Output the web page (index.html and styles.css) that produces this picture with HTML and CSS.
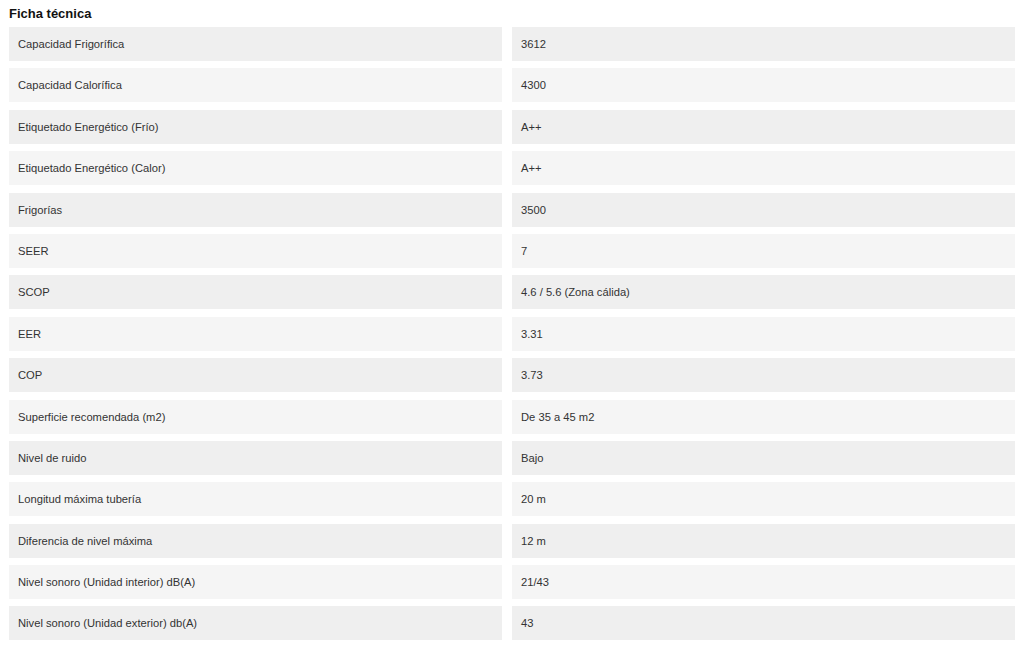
FILE: index.html
```html
<!DOCTYPE html>
<html lang="es">
<head>
<meta charset="utf-8">
<title>Ficha técnica</title>
<link rel="stylesheet" href="styles.css">
</head>
<body>
<section class="sheet">
  <h2 class="sheet-title">Ficha técnica</h2>
  <div class="spec-grid">
    <div class="cell dark">Capacidad Frigorífica</div><div class="cell dark">3612</div>
    <div class="cell light">Capacidad Calorífica</div><div class="cell light">4300</div>
    <div class="cell dark">Etiquetado Energético (Frío)</div><div class="cell dark">A++</div>
    <div class="cell light">Etiquetado Energético (Calor)</div><div class="cell light">A++</div>
    <div class="cell dark">Frigorías</div><div class="cell dark">3500</div>
    <div class="cell light">SEER</div><div class="cell light">7</div>
    <div class="cell dark">SCOP</div><div class="cell dark">4.6 / 5.6 (Zona cálida)</div>
    <div class="cell light">EER</div><div class="cell light">3.31</div>
    <div class="cell dark">COP</div><div class="cell dark">3.73</div>
    <div class="cell light">Superficie recomendada (m2)</div><div class="cell light">De 35 a 45 m2</div>
    <div class="cell dark">Nivel de ruido</div><div class="cell dark">Bajo</div>
    <div class="cell light">Longitud máxima tubería</div><div class="cell light">20 m</div>
    <div class="cell dark">Diferencia de nivel máxima</div><div class="cell dark">12 m</div>
    <div class="cell light">Nivel sonoro (Unidad interior) dB(A)</div><div class="cell light">21/43</div>
    <div class="cell dark">Nivel sonoro (Unidad exterior) db(A)</div><div class="cell dark">43</div>
  </div>
</section>
</body>
</html>
```
FILE: styles.css
```css
html, body {
  margin: 0;
  padding: 0;
  background: #ffffff;
}
body {
  font-family: "Liberation Sans", Arial, sans-serif;
  color: #333333;
}
.sheet {
  padding: 6px 9px 0 9px;
}
.sheet-title {
  margin: 0 0 6px 0;
  font-size: 13px;
  line-height: 15px;
  font-weight: bold;
  color: #111111;
}
.spec-grid {
  display: grid;
  grid-template-columns: 493px 503px;
  column-gap: 10px;
  row-gap: 7.4px;
  grid-auto-rows: 34px;
}
.cell {
  display: flex;
  align-items: center;
  padding: 0 9px;
  font-size: 11.2px;
  color: #333333;
}
.cell.dark {
  background: #efefef;
}
.cell.light {
  background: #f5f5f5;
}
```
